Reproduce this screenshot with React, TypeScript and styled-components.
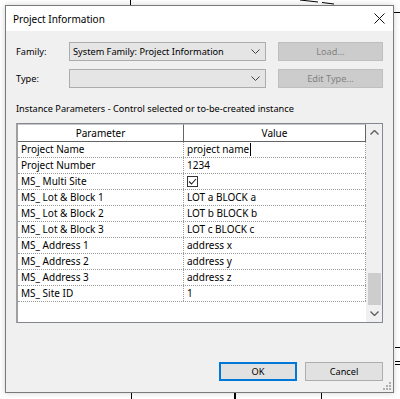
import React from "react";
import styled, { createGlobalStyle } from "styled-components";

const Global = createGlobalStyle`
  html, body {
    margin: 0;
    padding: 0;
    background: #ffffff;
    overflow: hidden;
  }
  * { box-sizing: border-box; }
`;

const uiFont = `"Noto Sans", "Open Sans", Arial, sans-serif`;

const Page = styled.div`
  position: relative;
  width: 400px;
  height: 399px;
  padding: 5px 0 0 5px;
  font-family: ${uiFont};
  font-size: 9.2px;
  color: #000;
`;

const Drawing = styled.svg`
  position: absolute;
  left: 0;
  top: 0;
  width: 400px;
  height: 399px;
`;

const Dialog = styled.div`
  position: relative;
  width: 389px;
  height: 388px;
  border: 1px solid #7a7a7a;
  background: #f0f0f0;
  box-shadow: 0 0 6px rgba(0, 0, 0, 0.18);
  display: flex;
  flex-direction: column;
`;

const TitleBar = styled.div`
  height: 25px;
  background: #ffffff;
  display: flex;
  align-items: center;
  justify-content: space-between;
  padding: 0 8px 0 7px;
  font-size: 10px;
`;

const CloseIcon = styled.svg`
  width: 11px;
  height: 11px;
`;

const Body = styled.div`
  flex: 1;
  padding: 11px 10px 11px 9px;
  display: flex;
  flex-direction: column;
`;

const FieldRow = styled.div<{ $gap?: number }>`
  display: flex;
  align-items: center;
  height: 19px;
  margin-top: ${(p) => p.$gap ?? 0}px;
`;

const FieldLabel = styled.div`
  width: 54px;
  padding-left: 1px;
`;

const Combo = styled.div`
  width: 197px;
  height: 19px;
  background: #e5e5e5;
  border: 1px solid #acacac;
  display: flex;
  align-items: center;
  justify-content: space-between;
  padding: 0 5px 0 3px;
`;

const Chevron = styled.svg`
  width: 9px;
  height: 5px;
`;

const SideButton = styled.div`
  margin-left: 12px;
  width: 105px;
  height: 19px;
  background: #cccccc;
  border: 1px solid #bfbfbf;
  color: #838383;
  display: flex;
  align-items: center;
  justify-content: center;
`;

const SectionLabel = styled.div`
  margin-top: 13px;
  height: 16px;
  line-height: 16px;
  padding-left: 1px;
`;

const Table = styled.div`
  margin: 6px 0 0 1px;
  height: 200px;
  border: 1px solid #828790;
  border-left: 2px solid #a0a0a0;
  background: #ffffff;
  display: flex;
  font-size: 10px;
`;

const Grid = styled.div`
  flex: 1;
  display: flex;
  flex-direction: column;
`;

const HeaderRow = styled.div`
  display: grid;
  grid-template-columns: 166px 1fr;
  height: 18px;
`;

const HeaderCell = styled.div`
  border: 1px solid #646464;
  border-top-color: #c8c8c8;
  border-left: none;
  display: flex;
  align-items: center;
  justify-content: center;
  background: #ffffff;
`;

const Row = styled.div`
  display: grid;
  grid-template-columns: 166px 1fr;
  height: 16px;
  border-bottom: 1px dotted #9a9a9a;
`;

const Cell = styled.div<{ $value?: boolean }>`
  padding-left: ${(p) => (p.$value ? 3 : 3)}px;
  line-height: 15px;
  white-space: nowrap;
  overflow: hidden;
  border-right: 1px dotted #9a9a9a;
  display: flex;
  align-items: center;
`;

const Caret = styled.span`
  display: inline-block;
  width: 1px;
  height: 13px;
  background: #000;
  margin-left: 1px;
`;

const CheckBox = styled.svg`
  width: 11px;
  height: 11px;
`;

const ScrollBar = styled.div`
  width: 16px;
  background: #f0f0f0;
  display: flex;
  flex-direction: column;
  align-items: center;
`;

const ArrowBtn = styled.div`
  height: 17px;
  width: 16px;
  display: flex;
  align-items: center;
  justify-content: center;
`;

const Track = styled.div`
  flex: 1;
  width: 16px;
  display: flex;
  flex-direction: column;
  justify-content: flex-end;
  align-items: center;
`;

const Thumb = styled.div`
  width: 13px;
  height: 32px;
  background: #cdcdcd;
`;

const Footer = styled.div`
  margin-top: 39px;
  display: flex;
  justify-content: flex-end;
  gap: 8px;
`;

const Button = styled.div<{ $primary?: boolean }>`
  width: 78px;
  height: 19px;
  background: #e1e1e1;
  border: ${(p) => (p.$primary ? "2px solid #0078d7" : "1px solid #adadad")};
  display: flex;
  align-items: center;
  justify-content: center;
`;

const Grip = styled.svg`
  position: absolute;
  right: 2px;
  bottom: 2px;
  width: 8px;
  height: 8px;
`;

const params: { name: string; value: string | boolean }[] = [
  { name: "Project Name", value: "project name" },
  { name: "Project Number", value: "1234" },
  { name: "MS_ Multi Site", value: true },
  { name: "MS_ Lot & Block 1", value: "LOT a BLOCK a" },
  { name: "MS_ Lot & Block 2", value: "LOT b BLOCK b" },
  { name: "MS_ Lot & Block 3", value: "LOT c BLOCK c" },
  { name: "MS_ Address 1", value: "address x" },
  { name: "MS_ Address 2", value: "address y" },
  { name: "MS_ Address 3", value: "address z" },
  { name: "MS_ Site ID", value: "1" },
];

function Down() {
  return (
    <Chevron viewBox="0 0 9 5">
      <path d="M0.5 0.5 L4.5 4.5 L8.5 0.5" fill="none" stroke="#404040" strokeWidth="1" />
    </Chevron>
  );
}

export default function App() {
  return (
    <>
      <Global />
      <Page>
        <Drawing viewBox="0 0 400 399">
          <g stroke="#000" strokeWidth="1" fill="none">
            <line x1="130.5" y1="0" x2="130.5" y2="6" />
            <path d="M300 0 L318 2 M322 2.5 L334 4" />
            <line x1="393" y1="12.5" x2="400" y2="12.5" />
            <line x1="395" y1="347.5" x2="400" y2="347.5" />
            <line x1="395" y1="361.5" x2="400" y2="361.5" />
            <line x1="395" y1="364.5" x2="400" y2="364.5" />
            <line x1="131.5" y1="393" x2="131.5" y2="399" />
            <line x1="235" y1="393" x2="235" y2="399" strokeWidth="2" />
            <line x1="321.5" y1="393" x2="321.5" y2="399" />
          </g>
        </Drawing>
        <Dialog>
          <TitleBar>
            <span>Project Information</span>
            <CloseIcon viewBox="0 0 11 11">
              <path d="M0.5 0.5 L10.5 10.5 M10.5 0.5 L0.5 10.5" stroke="#111" strokeWidth="1" />
            </CloseIcon>
          </TitleBar>
          <Body>
            <FieldRow>
              <FieldLabel>Family:</FieldLabel>
              <Combo>
                <span>System Family: Project Information</span>
                <Down />
              </Combo>
              <SideButton>Load...</SideButton>
            </FieldRow>
            <FieldRow $gap={8}>
              <FieldLabel>Type:</FieldLabel>
              <Combo>
                <span />
                <Down />
              </Combo>
              <SideButton>Edit Type...</SideButton>
            </FieldRow>
            <SectionLabel>
              Instance Parameters - Control selected or to-be-created instance
            </SectionLabel>
            <Table>
              <Grid>
                <HeaderRow>
                  <HeaderCell>Parameter</HeaderCell>
                  <HeaderCell>Value</HeaderCell>
                </HeaderRow>
                {params.map((p, i) => (
                  <Row key={p.name}>
                    <Cell>{p.name}</Cell>
                    <Cell $value>
                      {typeof p.value === "boolean" ? (
                        <CheckBox viewBox="0 0 11 11">
                          <rect x="0.5" y="0.5" width="10" height="10" fill="#fff" stroke="#333" />
                          <path d="M2 5.5 L4.5 8 L9 3" fill="none" stroke="#222" strokeWidth="1.1" />
                        </CheckBox>
                      ) : (
                        <>
                          {p.value}
                          {i === 0 && <Caret />}
                        </>
                      )}
                    </Cell>
                  </Row>
                ))}
              </Grid>
              <ScrollBar>
                <ArrowBtn>
                  <svg width="9" height="5" viewBox="0 0 9 5">
                    <path d="M0.5 4.5 L4.5 0.5 L8.5 4.5" fill="none" stroke="#606060" strokeWidth="1.4" />
                  </svg>
                </ArrowBtn>
                <Track>
                  <Thumb />
                </Track>
                <ArrowBtn>
                  <svg width="9" height="5" viewBox="0 0 9 5">
                    <path d="M0.5 0.5 L4.5 4.5 L8.5 0.5" fill="none" stroke="#606060" strokeWidth="1.4" />
                  </svg>
                </ArrowBtn>
              </ScrollBar>
            </Table>
            <Footer>
              <Button $primary>OK</Button>
              <Button>Cancel</Button>
            </Footer>
          </Body>
          <Grip viewBox="0 0 8 8">
            <g fill="#b0b0b0">
              <rect x="6" y="0" width="2" height="2" />
              <rect x="3" y="3" width="2" height="2" />
              <rect x="6" y="3" width="2" height="2" />
              <rect x="0" y="6" width="2" height="2" />
              <rect x="3" y="6" width="2" height="2" />
              <rect x="6" y="6" width="2" height="2" />
            </g>
          </Grip>
        </Dialog>
      </Page>
    </>
  );
}
